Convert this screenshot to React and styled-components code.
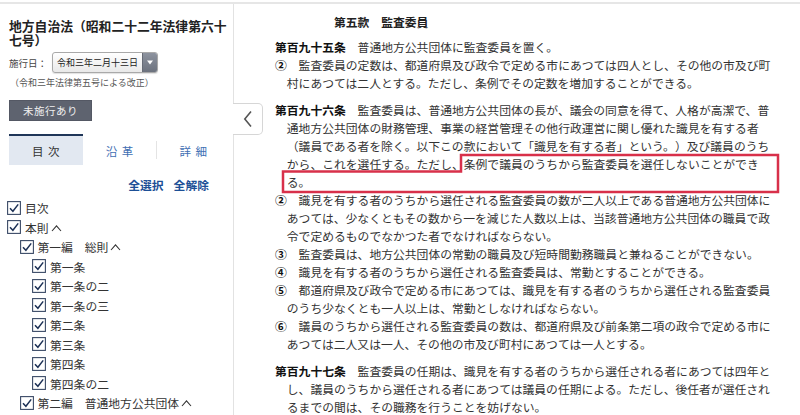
import React from "react";
import styled, { createGlobalStyle } from "styled-components";

const GlobalStyle = createGlobalStyle`
  html, body { margin: 0; padding: 0; background: #fff; }
  body {
    font-family: "Noto Sans CJK JP", "Noto Sans", sans-serif;
    color: #333;
    text-spacing-trim: space-all;
  }
  #root { width: 800px; height: 415px; overflow: hidden; }
  * { box-sizing: border-box; }
`;

const Page = styled.div`
  width: 800px;
  height: 415px;
  overflow: hidden;
  display: flex;
  flex-direction: column;
  text-spacing-trim: space-all;
`;

const TopRule = styled.div`
  height: 2px;
  margin-top: 2px;
  background: #e6e6e6;
  flex-shrink: 0;
`;

const Body = styled.div`
  position: relative;
  flex: 1;
  min-height: 0;
  display: flex;
`;

const Sidebar = styled.aside`
  width: 234px;
  flex-shrink: 0;
  border-right: 1px solid #e2e2e2;
  padding: 15px 3px 0 9px;
  overflow: hidden;
`;

const LawTitle = styled.h1`
  margin: 0;
  font-size: 12.8px;
  line-height: 14px;
  font-weight: 700;
  color: #222;
`;

const DateRow = styled.div`
  display: flex;
  align-items: center;
  margin-top: 5px;
`;

const DateLabel = styled.span`
  width: 43px;
  font-size: 9.5px;
  color: #444;
`;

const DateSelect = styled.div`
  width: 106px;
  height: 21px;
  display: flex;
  border: 1px solid #a9a9a9;
  border-radius: 3px;
  overflow: hidden;
  background: linear-gradient(#ffffff, #e9e9e9);
  box-shadow: 0 1px 1px rgba(0, 0, 0, 0.12);
`;

const DateText = styled.span`
  flex: 1;
  display: flex;
  align-items: center;
  padding-left: 4px;
  font-size: 9px;
  color: #222;
`;

const DateArrow = styled.span`
  width: 15px;
  display: flex;
  align-items: center;
  justify-content: center;
  background: linear-gradient(#8d939f, #6c727e);
  border-left: 1px solid #666b76;
`;

const Note = styled.div`
  margin-top: 3px;
  font-size: 9px;
  line-height: 14px;
  color: #555;
  padding-left: 1px;
`;

const PendingButton = styled.div`
  margin-top: 10px;
  width: 83px;
  height: 21px;
  display: flex;
  align-items: center;
  justify-content: center;
  background: #5e636f;
  border: 1px solid #545864;
  color: #f0f0f0;
  font-size: 10.5px;
  letter-spacing: 0.5px;
`;

const Tabs = styled.div`
  margin-top: 13px;
  height: 31px;
  display: flex;
`;

const Tab = styled.div`
  position: relative;
  flex: 1;
  display: flex;
  align-items: center;
  justify-content: center;
  border-top: 2px solid ${(p) => (p.$active ? "#1f3658" : "transparent")};
  background: ${(p) => (p.$active ? "#e2e8f1" : "#fff")};
  color: ${(p) => (p.$active ? "#333" : "#3f6fb3")};
  font-size: 11.5px;
  letter-spacing: 4.5px;
  padding-left: 4.5px;
  ${(p) =>
    p.$divider &&
    `&::before { content: ""; position: absolute; left: 0; top: 5px; bottom: 6px; width: 1px; background: #e4e4e4; }`}
`;

const Links = styled.div`
  margin-top: 12px;
  display: flex;
  justify-content: flex-end;
  gap: 10px;
  padding-right: 21px;
  line-height: 16px;
`;

const LinkText = styled.span`
  font-size: 11.8px;
  font-weight: 700;
  color: #1c4f96;
`;

const Tree = styled.div`
  margin-top: 5px;
  margin-left: -2px;
`;

const TreeRow = styled.div`
  display: flex;
  align-items: center;
  height: 19.5px;
  padding-left: ${(p) => p.$level * 12.5}px;
  font-size: 11.8px;
  color: #333;
  white-space: nowrap;
`;

const CheckBoxIcon = styled.svg`
  flex-shrink: 0;
  margin-right: 4px;
`;

const Caret = styled.svg`
  margin-left: 2px;
  margin-top: 1px;
`;

const Main = styled.main`
  flex: 1;
  padding: 9px 0 0 41px;
  overflow: hidden;
`;

const ChapterTitle = styled.div`
  padding-left: 5em;
  font-size: 11.8px;
  line-height: 18px;
  font-weight: 700;
  color: #222;
  margin-bottom: 7px;
`;

const Article = styled.section`
  & + & {
    margin-top: 9px;
  }
`;

const Para = styled.p`
  position: relative;
  margin: 0;
  width: 42.4em;
  font-size: 11.8px;
  line-height: 18px;
  color: #333;
  padding-left: 1em;
  text-indent: -1em;
  text-spacing-trim: space-all;
`;

const ArticleNo = styled.span`
  font-weight: 700;
  color: #111;
`;

const ParaNo = styled.span`
  font-weight: 700;
  color: #111;
`;

const Highlight = styled.svg`
  position: absolute;
  left: 0;
  top: 0;
  overflow: visible;
  pointer-events: none;
`;

const CollapseButton = styled.div`
  position: absolute;
  left: 233px;
  top: 99px;
  width: 30px;
  height: 32px;
  display: flex;
  align-items: center;
  justify-content: center;
  background: #fff;
  border: 1px solid #d6d6d6;
  border-left: none;
  border-radius: 0 5px 5px 0;
`;

const CheckBox = () => (
  <CheckBoxIcon width="14" height="14" viewBox="0 0 14 14">
    <rect x="0.6" y="0.6" width="12.8" height="12.8" fill="#fff" stroke="#3a4a66" strokeWidth="1.1" />
    <path d="M3 7.2 L5.9 10.3 L11.2 3.4" fill="none" stroke="#1d3156" strokeWidth="1.5" />
  </CheckBoxIcon>
);

const CaretUp = () => (
  <Caret width="11" height="8" viewBox="0 0 11 8">
    <polyline points="1,7 5.5,1.8 10,7" fill="none" stroke="#333" strokeWidth="1.1" />
  </Caret>
);

const tree = [
  { label: "目次", level: 0 },
  { label: "本則", level: 0, caret: true },
  { label: "第一編　総則", level: 1, caret: true },
  { label: "第一条", level: 2 },
  { label: "第一条の二", level: 2 },
  { label: "第一条の三", level: 2 },
  { label: "第二条", level: 2 },
  { label: "第三条", level: 2 },
  { label: "第四条", level: 2 },
  { label: "第四条の二", level: 2 },
  { label: "第二編　普通地方公共団体", level: 1, caret: true },
];

export default function App() {
  return (
    <Page lang="ja">
      <GlobalStyle />
      <TopRule />
      <Body>
        <Sidebar>
          <LawTitle>地方自治法（昭和二十二年法律第六十七号）</LawTitle>
          <DateRow>
            <DateLabel>施行日：</DateLabel>
            <DateSelect>
              <DateText>令和三年二月十三日</DateText>
              <DateArrow>
                <svg width="6" height="5" viewBox="0 0 6 5">
                  <polygon points="0,0.5 6,0.5 3,4.5" fill="#fff" />
                </svg>
              </DateArrow>
            </DateSelect>
          </DateRow>
          <Note>（令和三年法律第五号による改正）</Note>
          <PendingButton>未施行あり</PendingButton>
          <Tabs>
            <Tab $active>目次</Tab>
            <Tab>沿革</Tab>
            <Tab $divider>詳細</Tab>
          </Tabs>
          <Links>
            <LinkText>全選択</LinkText>
            <LinkText>全解除</LinkText>
          </Links>
          <Tree>
            {tree.map((t, i) => (
              <TreeRow key={i} $level={t.level}>
                <CheckBox />
                <span>{t.label}</span>
                {t.caret && <CaretUp />}
              </TreeRow>
            ))}
          </Tree>
        </Sidebar>
        <Main>
          <ChapterTitle>第五款　監査委員</ChapterTitle>
          <Article>
            <Para>
              <ArticleNo>第百九十五条</ArticleNo>　普通地方公共団体に監査委員を置く。
            </Para>
            <Para>
              <ParaNo>②</ParaNo>　監査委員の定数は、都道府県及び政令で定める市にあつては四人とし、その他の市及び町村にあつては二人とする。ただし、条例でその定数を増加することができる。
            </Para>
          </Article>
          <Article>
            <Para>
              <ArticleNo>第百九十六条</ArticleNo>　監査委員は、普通地方公共団体の長が、議会の同意を得て、人格が高潔で、普通地方公共団体の財務管理、事業の経営管理その他行政運営に関し優れた識見を有する者（議員である者を除く。以下この款において「識見を有する者」という。）及び議員のうちから、これを選任する。ただし、条例で議員のうちから監査委員を選任しないことができる。
              <Highlight width="1" height="1">
                <polygon
                  points="186,54 503,54 503,91 8,91 8,70.5 186,70.5"
                  fill="none"
                  stroke="#d8304a"
                  strokeWidth="2.5"
                />
              </Highlight>
            </Para>
            <Para>
              <ParaNo>②</ParaNo>　識見を有する者のうちから選任される監査委員の数が二人以上である普通地方公共団体にあつては、少なくともその数から一を減じた人数以上は、当該普通地方公共団体の職員で政令で定めるものでなかつた者でなければならない。
            </Para>
            <Para>
              <ParaNo>③</ParaNo>　監査委員は、地方公共団体の常勤の職員及び短時間勤務職員と兼ねることができない。
            </Para>
            <Para>
              <ParaNo>④</ParaNo>　識見を有する者のうちから選任される監査委員は、常勤とすることができる。
            </Para>
            <Para>
              <ParaNo>⑤</ParaNo>　都道府県及び政令で定める市にあつては、識見を有する者のうちから選任される監査委員のうち少なくとも一人以上は、常勤としなければならない。
            </Para>
            <Para>
              <ParaNo>⑥</ParaNo>　議員のうちから選任される監査委員の数は、都道府県及び前条第二項の政令で定める市にあつては二人又は一人、その他の市及び町村にあつては一人とする。
            </Para>
          </Article>
          <Article>
            <Para>
              <ArticleNo>第百九十七条</ArticleNo>　監査委員の任期は、識見を有する者のうちから選任される者にあつては四年とし、議員のうちから選任される者にあつては議員の任期による。ただし、後任者が選任されるまでの間は、その職務を行うことを妨げない。
            </Para>
          </Article>
        </Main>
        <CollapseButton>
          <svg width="10" height="18" viewBox="0 0 10 18">
            <polyline points="8,1.5 1.8,9 8,16.5" fill="none" stroke="#555" strokeWidth="1.6" />
          </svg>
        </CollapseButton>
      </Body>
    </Page>
  );
}
